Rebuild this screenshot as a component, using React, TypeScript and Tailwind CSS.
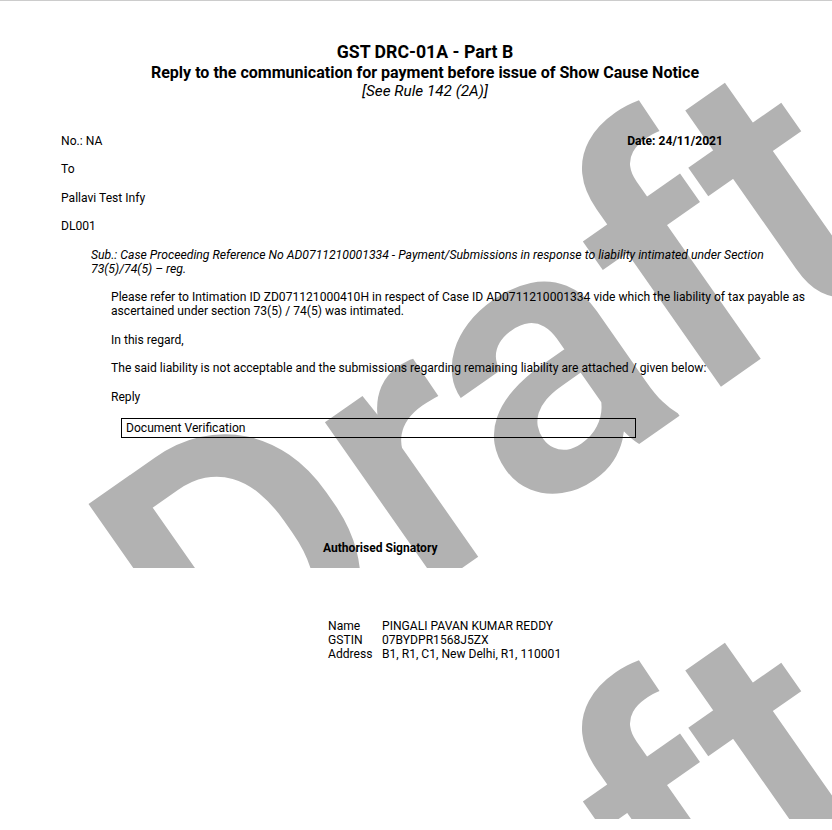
export default function App() {
  const mark = "absolute font-semibold text-[#b2b2b2] leading-none whitespace-nowrap rotate-[-35deg] origin-top-left text-[375px] select-none";
  return (
    <div className="relative w-[832px] h-[830px] bg-white overflow-hidden text-black text-[12.1px] leading-[14px] [font-family:Roboto,sans-serif]">
      <div className="absolute left-0 top-0 w-full h-[568px] overflow-hidden">
        <div className={`${mark} left-[40px] top-[479px]`}>Draft</div>
      </div>
      <div className="absolute left-0 top-[568px] w-full h-[251px] overflow-hidden">
        <div className={`${mark} left-[40px] top-[471px]`}>Draft</div>
      </div>
      <div className="absolute left-0 top-0 w-full h-px bg-[#cccccc]" />
      <div className="relative flex flex-col pt-[42px]">
        <div className="flex flex-col items-center w-[760px] ml-[45px]">
          <h1 className="text-[17.7px] font-bold leading-[21px]">GST DRC-01A - Part B</h1>
          <h2 className="text-[16.05px] font-bold leading-[19px]">Reply to the communication for payment before issue of Show Cause Notice</h2>
          <p className="text-[15.3px] italic leading-[18px]">[See Rule 142 (2A)]</p>
        </div>
        <div className="flex justify-between pl-[61px] pr-[109px] mt-[34px]">
          <span>No.: NA</span>
          <span className="font-bold">Date: 24/11/2021</span>
        </div>
        <p className="ml-[61px] mt-[14px]">To</p>
        <p className="ml-[61px] mt-[14.5px]">Pallavi Test Infy</p>
        <p className="ml-[61px] mt-[14.5px]">DL001</p>
        <p className="ml-[91px] mr-[60px] mt-[14.5px] italic text-[12.22px]">Sub.: Case Proceeding Reference No AD0711210001334 - Payment/Submissions in response to liability intimated under Section 73(5)/74(5) – reg.</p>
        <p className="ml-[111px] mr-[20px] mt-[14.5px]">Please refer to Intimation ID ZD071121000410H in respect of Case ID AD0711210001334 vide which the liability of tax payable as ascertained under section 73(5) / 74(5) was intimated.</p>
        <p className="ml-[111px] mt-[14.5px]">In this regard,</p>
        <p className="ml-[111px] mt-[14.5px]">The said liability is not acceptable and the submissions regarding remaining liability are attached / given below:</p>
        <p className="ml-[111px] mt-[14.5px]">Reply</p>
        <div className="ml-[121px] mt-[14px] w-[515px] h-[20px] border border-black pl-[4px] pt-[2px]">Document Verification</div>
        <p className="ml-[323px] mt-[103px] font-bold text-[12.05px]">Authorised Signatory</p>
        <div className="ml-[328px] mt-[64px] grid grid-cols-[54px_1fr]">
          <span>Name</span><span>PINGALI PAVAN KUMAR REDDY</span>
          <span>GSTIN</span><span>07BYDPR1568J5ZX</span>
          <span>Address</span><span>B1, R1, C1, New Delhi, R1, 110001</span>
        </div>
      </div>
    </div>
  );
}
